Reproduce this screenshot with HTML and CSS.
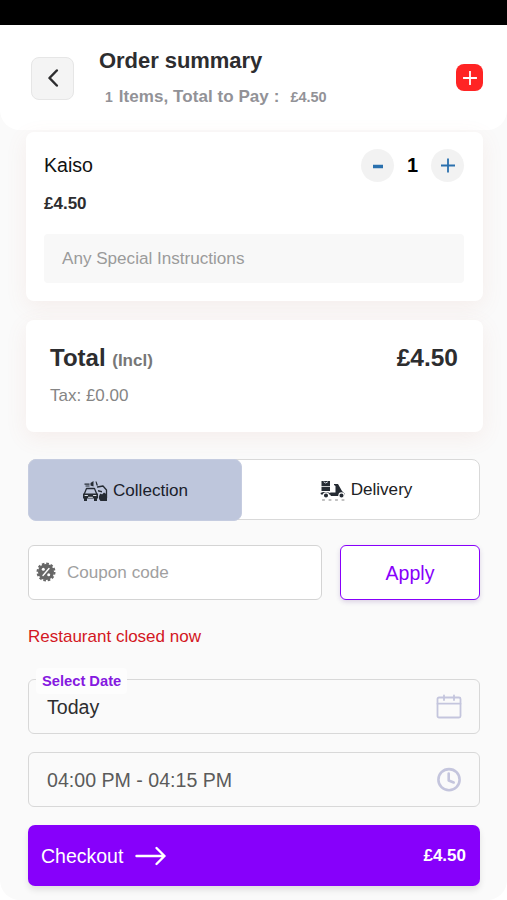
FILE: index.html
```html
<!DOCTYPE html>
<html lang="en">
<head>
<meta charset="utf-8">
<title>Order summary</title>
<link rel="stylesheet" href="styles.css">
</head>
<body>
<div class="status-bar"></div>
<div class="screen">
  <header class="header">
    <button class="back" aria-label="Back"><svg width="12" height="18" viewBox="0 0 12 18"><path d="M9.800 1.500 2.500 9l7.300 7.500"/></svg></button>
    <div class="heading">
      <h1>Order summary</h1>
      <p><small class="count">1</small> <span class="label">Items, Total to Pay :</span><small class="sum">£4.50</small></p>
    </div>
    <button class="add" aria-label="Add"><svg width="14" height="14" viewBox="0 0 14 14"><path d="M7 .5v13M.5 7h13"/></svg></button>
  </header>
  <main>
    <section class="card item">
      <div class="row">
        <span class="name">Kaiso</span>
        <div class="stepper">
          <button aria-label="Less"><svg width="16" height="16" viewBox="0 0 16 16"><path class="minus" d="M3 9.500h10"/></svg></button>
          <b>1</b>
          <button aria-label="More"><svg width="16" height="16" viewBox="0 0 16 16"><path class="plus" d="M8 1.500v14M1 8.500h14"/></svg></button>
        </div>
      </div>
      <div class="price">£4.50</div>
      <div class="note">Any Special Instructions</div>
    </section>
    <section class="card total">
      <div class="row"><div class="total-label">Total <small>(Incl)</small></div><div class="total-sum">£4.50</div></div>
      <div class="tax">Tax: £0.00</div>
    </section>
    <div class="tabs">
      <div class="tab active">
        <svg width="26" height="22" viewBox="0 0 26 22">
          <path class="fill" d="M2.500 3.500h5v1.300h-5zM3.500 5.500h4v1h-4zM8.500 3l3-2v5.500l-3-1zM13.500 1.500h1l1.500 4h-1.500z"/>
          <path class="line" d="m2.500 13.500 2-5h8l2 5M15.500 7l5.500-1 3.500 4v8"/>
          <path class="fill" d="M1 13.500h15v5H1zM2 18.500h3V21H2zM12 18.500h3V21h-3zM17.500 15c.5-2 2-1.500 2.500-.5l2-2 3 2V21h-6.500c-2-2-2-4-1-6zM16 10l4 1v1.500l-4-1z"/>
          <path class="cut" d="M3 15.500h2.500M11.500 15.500H14M6.500 17.300h4"/>
        </svg>
        <span>Collection</span>
      </div>
      <div class="tab delivery">
        <svg width="26" height="21" viewBox="0 0 26 21">
          <path class="fill" d="M1.500 1H10v5H1.500zM1.500 6.700H10V11H1.500zM.5 13c1-1.500 8-1.500 9.500 0l.5-.5h5V6L14 5V4h4l4 7 3 3-1 .8-3-1.300-3 2.500h-7l-1-1.500H1z"/>
          <path class="cut" d="m4 2 1.700 1L7.500 2"/>
          <circle class="wheel" cx="6" cy="15.500" r="2.600"/><circle class="wheel" cx="21.500" cy="15.500" r="2.600"/>
          <path class="dash" d="M2.500 20h2m4.500 0h2m4.500 0h2m4.500 0h2"/>
        </svg>
        <span>Delivery</span>
      </div>
    </div>
    <div class="coupon-row">
      <div class="coupon">
        <svg width="20" height="20" viewBox="0 0 20 20">
          <circle class="badge" cx="10" cy="10" r="8"/><circle class="teeth" cx="10" cy="10" r="8.500"/>
          <path d="m7 13.500 6-7"/><circle class="dot" cx="7.300" cy="7.300" r="1.500"/><circle class="dot" cx="12.700" cy="12.700" r="1.500"/>
        </svg>
        <span>Coupon code</span>
      </div>
      <button class="apply">Apply</button>
    </div>
    <p class="closed">Restaurant closed now</p>
    <div class="field date">
      <span class="legend">Select Date</span>
      <span class="value">Today</span>
      <svg width="26" height="26" viewBox="0 0 26 26"><rect x="1.500" y="3.500" width="23" height="20" rx="1.500"/><path d="M1.500 9.700h23M8 1.500v4.500M18 1.500v4.500"/></svg>
    </div>
    <div class="field time">
      <span class="value">04:00 PM - 04:15 PM</span>
      <svg width="26" height="26" viewBox="0 0 26 26"><g class="thick"><circle cx="13" cy="12.700" r="10.600"/><path d="M12.700 6.500v7l5 2"/></g></svg>
    </div>
    <button class="checkout">
      <span>Checkout</span>
      <svg width="32" height="20" viewBox="0 0 32 20"><path d="M1.500 10h28M21.500 2l8 8-8 8"/></svg>
      <b>£4.50</b>
    </button>
  </main>
</div>
</body>
</html>
```
FILE: styles.css
```css
* { box-sizing: border-box; }
body {
  margin: 0;
  height: 900px;
  overflow: hidden;
  background: #fff;
  font-family: "Liberation Sans", Arial, sans-serif;
  color: #2d2d2f;
}
h1, p { margin: 0; }
button { font: inherit; padding: 0; border: 0; }
svg { display: block; flex: none; fill: none; stroke-linecap: round; stroke-linejoin: round; }
.status-bar { height: 25px; background: #000; }
.screen { height: 875px; background: #fafafa; border-radius: 0 0 20px 20px; }
.header {
  height: 105px;
  padding: 0 24px 0 31px;
  display: flex;
  align-items: flex-start;
  background: #fff;
  border-radius: 0 0 20px 20px;
}
.back {
  width: 43px; height: 43px;
  margin-top: 32px;
  display: grid; place-items: center;
  background: #f4f4f4;
  border: 1px solid #e6e6e6;
  border-radius: 8px;
}
.back svg { stroke: #2d2d2f; stroke-width: 2.5; transform: translateY(-1px); }
.heading { flex: 1; margin-left: 25px; padding-top: 22px; }
h1 { font-size: 22px; line-height: 28px; letter-spacing: -.05px; }
.heading p { display: flex; align-items: baseline; margin: 11px 0 0 6px; line-height: 22px; color: #929297; font-weight: 700; }
.count { font-size: 14px; margin-right: 6px; }
.label { font-size: 17px; letter-spacing: .06px; }
.sum { font-size: 14.5px; margin-left: 11px; }
.add { width: 27px; height: 27px; margin-top: 39px; display: grid; place-items: center; background: #ff2424; border-radius: 8px; }
.add svg { stroke: #fff; stroke-width: 1.8; }
main { padding: 2px 27px 0 28px; display: flex; flex-direction: column; }
.card { margin: 0 -3px 0 -2px; background: #fff; border-radius: 8px; box-shadow: 0 6px 22px rgba(200, 110, 90, .09); }
.row { display: flex; align-items: center; justify-content: space-between; }
.item { height: 169px; padding: 16px 19px 18px 18px; }
.item .row { height: 34px; }
.name { font-size: 19.6px; color: #111; }
.stepper { display: flex; align-items: center; }
.stepper button { width: 33px; height: 33px; display: grid; place-items: center; border-radius: 50%; background: #f2f2f2; }
.stepper svg { stroke: #2a70ae; stroke-linecap: butt; }
.minus { stroke-width: 3.5; }
.plus { stroke-width: 1.8; }
.stepper b { width: 37px; text-align: center; font-size: 20px; color: #000; }
.price { margin-top: 12px; font-size: 17px; line-height: 20px; font-weight: 700; }
.note { margin-top: 20px; height: 49px; padding-left: 18px; line-height: 49px; border-radius: 4px; background: #f8f8f8; color: #9b9b9b; font-size: 17.1px; }
.total { margin-top: 19px; height: 112px; padding: 24px 25px 0 24px; }
.total .row { height: 28px; font-weight: 700; }
.total-label { font-size: 24px; }
.total-label small { font-size: 17px; color: #777; }
.total-sum { font-size: 24.5px; }
.tax { margin-top: 13px; font-size: 17px; line-height: 22px; color: #858585; }
.tabs { margin-top: 27px; height: 61px; display: flex; background: #fff; border: 1px solid #d9d9d9; border-radius: 8px; }
.tab { flex: 1; display: flex; align-items: center; justify-content: center; gap: 5px; font-size: 17.1px; color: #202124; }
.tab.active { flex: none; width: 214px; margin: -1px 0 -2px -1px; padding-top: 2px; background: #bec6dc; border: 1px solid #c5cce0; border-radius: 8px; color: #1a202b; }
.tab.delivery { padding: 1px 0 0 11px; }
.tab .fill { fill: #252b33; }
.tab .line { stroke: #252b33; stroke-width: 1.3; }
.tab .dash { stroke: #777; stroke-width: .9; }
.tab .cut { stroke: #dce0e8; stroke-width: 1; }
.tab .wheel { fill: #252b33; stroke: #fff; stroke-width: 1.1; }
.coupon-row { margin-top: 25px; height: 55px; display: flex; gap: 18px; }
.coupon { width: 294px; padding-left: 7px; display: flex; align-items: center; gap: 11px; background: #fff; border: 1.5px solid #d4d4d4; border-radius: 6px; color: #a0a0a0; font-size: 17.1px; }
.coupon svg { transform: translateY(-1px); }
.badge { fill: #666; }
.teeth { stroke: #666; stroke-width: 2; stroke-linecap: butt; stroke-dasharray: 2.6 1.85; }
.coupon path { stroke: #fff; stroke-width: 1.4; }
.dot { fill: #fff; }
.apply { flex: 1; padding-top: 1px; border: 1.5px solid #8700fb; border-radius: 6px; background: #fff; color: #8700fb; font-size: 19.5px; box-shadow: 0 2px 5px rgba(60, 0, 120, .16); }
.closed { margin-top: 26px; font-size: 17px; line-height: 22px; color: #d31622; }
.field { height: 55px; padding: 0 17px 0 18px; display: flex; align-items: center; justify-content: space-between; border: 1.5px solid #d8d8d8; border-radius: 6px; font-size: 19.6px; }
.field svg { stroke: #c4c5dd; stroke-width: 1.8; }
.field .thick { stroke-width: 2.6; }
.value { padding-top: 1px; }
.date { position: relative; margin-top: 31px; }
.legend { position: absolute; left: 7px; top: -12px; padding: 0 6px; height: 26px; line-height: 27px; background: #fdfdfd; border-radius: 4px; color: #8519e0; font-size: 14.7px; font-weight: 700; }
.time { margin-top: 18px; color: #5b5b5b; }
.checkout { margin-top: 18px; height: 61px; padding: 1px 14px 0 13px; display: flex; align-items: center; border-radius: 7px; background: #8700fb; color: #fff; font-size: 19.5px; box-shadow: 0 4px 6px rgba(0, 0, 0, .1); }
.checkout svg { margin-left: 12px; stroke: #fff; stroke-width: 2.4; }
.checkout b { margin-left: auto; font-size: 17px; }
```
